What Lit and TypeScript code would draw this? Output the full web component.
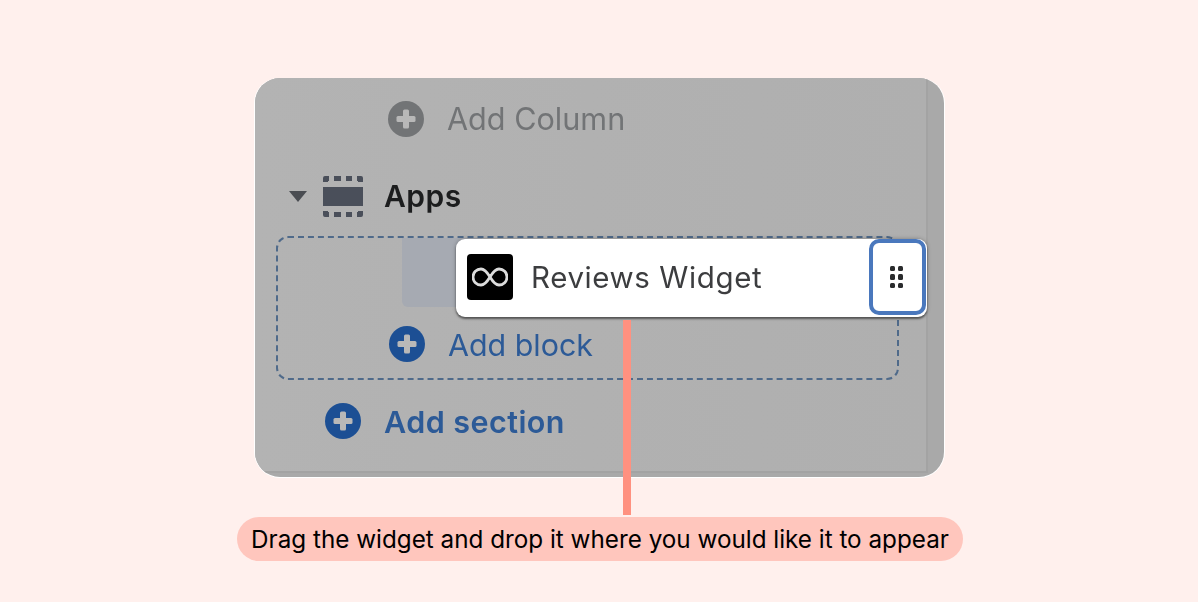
import { LitElement, html, css, svg } from "lit";
import { customElement } from "lit/decorators.js";

const plus = (bg: string) => svg`<svg class="plus" viewBox="0 0 36 36" width="36" height="36">
  <circle cx="18" cy="18" r="18" fill=${bg}></circle>
  <rect x="8.5" y="15" width="19" height="6" rx="1.5" fill="#b8b8b8"></rect>
  <rect x="15" y="8.5" width="6" height="19" rx="1.5" fill="#b8b8b8"></rect>
</svg>`;

@customElement("app-root")
export class AppRoot extends LitElement {
  static styles = css`
    :host {
      display: block;
      width: 1198px;
      height: 602px;
      background: #fff0ed;
      font-family: Inter, "Liberation Sans", sans-serif;
      overflow: hidden;
    }
    .page {
      display: flex;
      flex-direction: column;
      align-items: center;
      padding-top: 78px;
      position: relative;
    }
    .panel {
      box-sizing: border-box;
      position: relative;
      width: 689px;
      height: 399px;
      margin-left: 1px;
      border-radius: 25px;
      background: #a9a9a9;
      box-shadow: 0 1px 0 #fff, 1px 0 0 #fff, -1px 0 0 #fff;
      overflow: hidden;
    }
    .sheet {
      box-sizing: border-box;
      width: 673px;
      height: 395px;
      background: linear-gradient(90deg, #b3b3b3, #afafaf);
      border-right: 2px solid #a3a3a3;
      border-bottom: 2px solid #a3a3a3;
      padding-top: 23px;
      filter: blur(0.5px);
    }
    .row {
      display: flex;
      align-items: center;
      height: 36px;
    }
    .col-row {
      padding-left: 133px;
      gap: 23px;
      font-size: 30.6px;
      color: #727476;
    }
    .col-row span {
      margin-top: -2px;
    }
    .apps-row {
      margin-top: 41px;
      padding-left: 34px;
      font-size: 30px;
      font-weight: 600;
      letter-spacing: 0.5px;
      color: #1c1d1e;
    }
    .apps-row .icon {
      margin-left: 16px;
      margin-right: 21px;
    }
    .dropzone {
      box-sizing: border-box;
      width: 623px;
      height: 144px;
      margin: 22px 0 0 21px;
      border: 2px dashed #4f6a8a;
      border-radius: 12px;
      padding: 88px 0 0 111px;
      position: relative;
    }
    .dropzone .add span {
      margin-top: 2px;
    }
    .ghost {
      position: absolute;
      left: 124px;
      top: 0;
      width: 80px;
      height: 69px;
      border-radius: 0 0 6px 6px;
      background: #a6aab2;
    }
    .add {
      color: #2c5a97;
      font-size: 30.4px;
      gap: 23px;
    }
    .section-row {
      margin-top: 23px;
      padding-left: 70px;
      font-size: 30.5px;
      font-weight: 600;
      letter-spacing: 0.45px;
    }
    .drag-card {
      position: absolute;
      left: 201px;
      top: 161px;
      box-sizing: border-box;
      width: 471px;
      height: 78px;
      display: flex;
      align-items: center;
      padding: 0 1px 2px 11px;
      background: #fff;
      border-radius: 9px;
      box-shadow: 0 2px 2px rgba(0, 0, 0, 0.45), 0 0 4px rgba(0, 0, 0, 0.3);
      font-size: 29.5px;
      letter-spacing: 0.6px;
      color: #3c3d3f;
      filter: blur(0.4px);
    }
    .logo {
      width: 46px;
      height: 46px;
      border-radius: 4px;
      background: #000;
      display: flex;
      align-items: center;
      justify-content: center;
      margin-right: 18px;
    }
    .handle {
      box-sizing: border-box;
      align-self: flex-start;
      margin-left: auto;
      width: 57px;
      height: 76px;
      padding-right: 2px;
      display: flex;
      align-items: center;
      justify-content: center;
      border: 4px solid #4a78bd;
      border-radius: 10px;
    }
    .connector {
      position: absolute;
      left: 623px;
      top: 320px;
      width: 8px;
      height: 195px;
      background: #ff9180;
    }
    .pill {
      margin: 40px 0 0 2px;
      height: 44px;
      padding: 0 14px;
      display: flex;
      align-items: center;
      border-radius: 22px;
      background: #ffc6bd;
      color: #000;
      font-size: 24.25px;
      white-space: nowrap;
    }
  `;

  render() {
    return html`
      <div class="page">
        <div class="panel">
          <div class="sheet">
            <div class="row col-row">${plus("#727476")}<span>Add Column</span></div>
            <div class="row apps-row">
              <svg width="18" height="12" viewBox="0 0 18 12"><path d="M0 1h18L9 12z" fill="#4a4d52"></path></svg>
              <svg class="icon" width="40" height="41" viewBox="0 0 40 41" fill="#4a4f5a">
                <rect x="0" y="11" width="40" height="19"></rect>
                <path d="M0 6V2a2 2 0 0 1 2-2h4v5H5v1z"></path>
                <rect x="11" y="0" width="7" height="5"></rect>
                <rect x="23" y="0" width="6" height="5"></rect>
                <path d="M34 0h4a2 2 0 0 1 2 2v4h-5V5h-1z"></path>
                <path d="M0 35v4a2 2 0 0 0 2 2h4v-5H5v-1z"></path>
                <rect x="11" y="36" width="7" height="5"></rect>
                <rect x="23" y="36" width="6" height="5"></rect>
                <path d="M34 41h4a2 2 0 0 0 2-2v-4h-5v1h-1z"></path>
              </svg>
              <span>Apps</span>
            </div>
            <div class="dropzone">
              <div class="ghost"></div>
              <div class="row add">${plus("#1c4f94")}<span>Add block</span></div>
            </div>
            <div class="row add section-row">${plus("#1c4f94")}<span>Add section</span></div>
          </div>
          <div class="drag-card">
            <div class="logo">
              <svg width="36" height="20" viewBox="0 0 36 20" fill="none" stroke="#dcdcdc" stroke-width="2.8">
                <path d="M18 10C15 5 12.500 2 9 2a8 8 0 0 0 0 16c3.500 0 6-3 9-8s5.500-8 9-8a8 8 0 0 1 0 16c-3.500 0-6-3-9-8z"></path>
              </svg>
            </div>
            <span>Reviews Widget</span>
            <div class="handle">
              <svg width="13" height="22" viewBox="0 0 13 22" fill="#2a2b2d">
                <rect x="0" y="0" width="5" height="5" rx="1.5"></rect>
                <rect x="8" y="0" width="5" height="5" rx="1.5"></rect>
                <rect x="0" y="8" width="5" height="6" rx="1.5"></rect>
                <rect x="8" y="8" width="5" height="6" rx="1.5"></rect>
                <rect x="0" y="17" width="5" height="5" rx="1.5"></rect>
                <rect x="8" y="17" width="5" height="5" rx="1.5"></rect>
              </svg>
            </div>
          </div>
        </div>
        <div class="connector"></div>
        <div class="pill">Drag the widget and drop it where you would like it to appear</div>
      </div>
    `;
  }
}
